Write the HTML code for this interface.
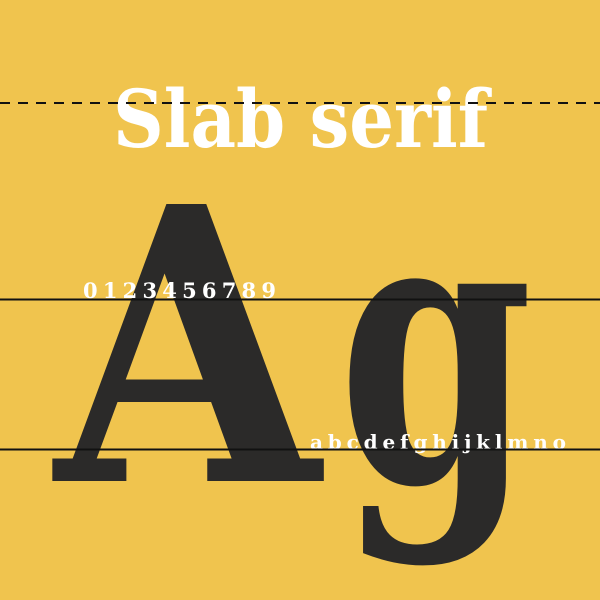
<!DOCTYPE html>
<html><head><style>
html,body{margin:0;padding:0;background:#F0C44E;width:600px;height:600px;overflow:hidden}
</style></head><body>
<svg width="600" height="600" xmlns="http://www.w3.org/2000/svg" style="display:block">
<rect width="600" height="600" fill="#F0C44E"/>
<g font-family="DejaVu Serif, Liberation Serif, serif" font-weight="bold">
<text x="55" y="481" font-size="380" fill="#2B2A29" textLength="265" lengthAdjust="spacingAndGlyphs">A</text>
<text x="338" y="481" font-size="380" fill="#2B2A29" textLength="195" lengthAdjust="spacingAndGlyphs">g</text>
<text x="113" y="147" font-size="80" fill="#fff" textLength="375" lengthAdjust="spacingAndGlyphs">Slab serif</text>
<text x="83" y="298" font-size="21" fill="#fff" textLength="193" lengthAdjust="spacing">0123456789</text>
<text x="310" y="449" font-size="20" fill="#fff" textLength="256" lengthAdjust="spacing">abcdefghijklmno</text>
</g>
<line x1="0" y1="103" x2="600" y2="103" stroke="#111" stroke-width="2" stroke-dasharray="10,8"/>
<line x1="0" y1="299.5" x2="600" y2="299.5" stroke="#111" stroke-width="2"/>
<line x1="0" y1="449.5" x2="600" y2="449.5" stroke="#111" stroke-width="2"/>
</svg>
</body></html>
